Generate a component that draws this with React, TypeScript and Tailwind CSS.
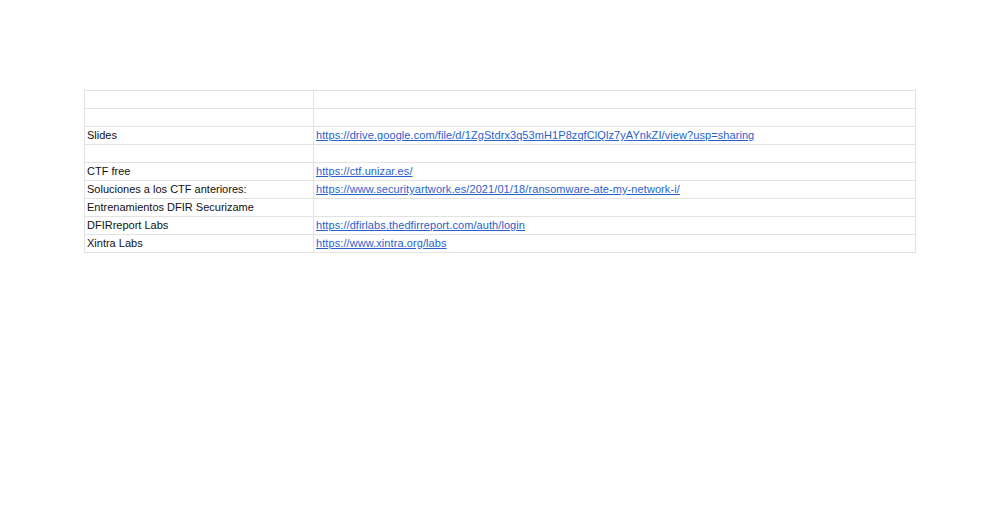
import React from "react";

const rows: [string, string][] = [
  ["", ""],
  ["", ""],
  ["Slides", "https://drive.google.com/file/d/1ZgStdrx3q53mH1P8zqfClQlz7yAYnkZI/view?usp=sharing"],
  ["", ""],
  ["CTF free", "https://ctf.unizar.es/"],
  ["Soluciones a los CTF anteriores:", "https://www.securityartwork.es/2021/01/18/ransomware-ate-my-network-i/"],
  ["Entrenamientos DFIR Securizame", ""],
  ["DFIRreport Labs", "https://dfirlabs.thedfirreport.com/auth/login"],
  ["Xintra Labs", "https://www.xintra.org/labs"],
];

export default function App() {
  return (
    <div className="w-[1000px] h-[525px] bg-white pt-[90px] pl-[84px]" style={{ fontFamily: '"Liberation Sans", Arial, sans-serif' }}>
      <div className="w-[832px] border-l border-t border-[#e2e2e2]">
        {rows.map(([a, b], i) => (
          <div key={i} className="flex h-[18px] border-b border-[#e2e2e2]">
            <div className="w-[229px] border-r border-[#e2e2e2] pl-[2px] text-[11px] leading-[17px] text-[#111]">{a}</div>
            <div className="flex-1 border-r border-[#e2e2e2] pl-[2px] text-[11px] leading-[17px] tracking-[0.08px]">
              {b && <span className="text-[#2a5fcc] underline">{b}</span>}
            </div>
          </div>
        ))}
      </div>
    </div>
  );
}
